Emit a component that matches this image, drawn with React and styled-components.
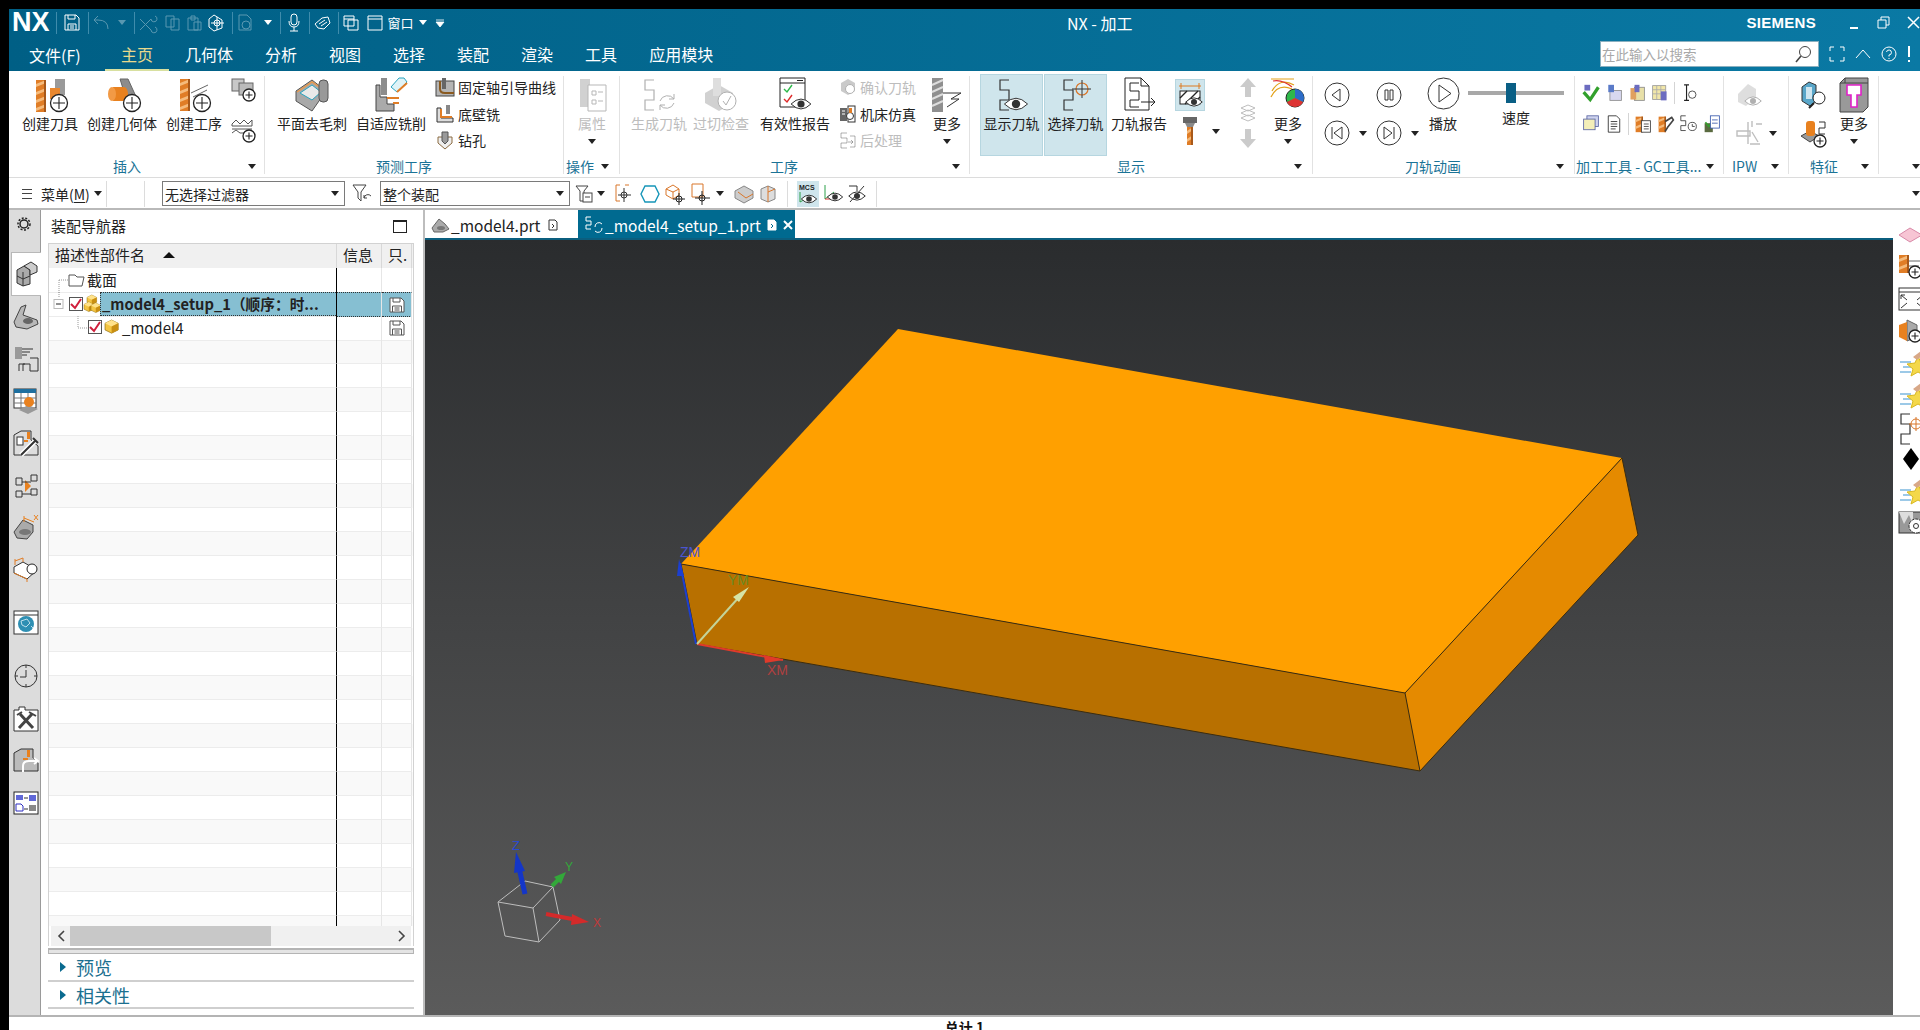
import React from 'react';
import styled, { createGlobalStyle } from 'styled-components';

const GlobalStyle = createGlobalStyle`
  html, body { margin: 0; padding: 0; background: #000; overflow: hidden; }
  * { box-sizing: border-box; }
  body { font-family: "Noto Sans CJK SC", "Noto Sans", sans-serif; }
`;

const Glyph = styled.svg`
  display: block;
  flex: none;
  overflow: visible;
`;

const G = ({ w = 24, h = 24, off, children }) => (
  <Glyph width={w} height={h} viewBox={`0 0 ${w} ${h}`} fill='none' opacity={off ? 0.38 : 1}>
    {children}
  </Glyph>
);

const Plus = ({ x, y, r = 8 }) => (
  <g>
    <circle cx={x} cy={y} r={r} fill='#fff' stroke='#222' strokeWidth='1.3' />
    <path d={`M${x - r + 2.5} ${y}H${x + r - 2.5}M${x} ${y - r + 2.5}V${y + r - 2.5}`} stroke='#222' strokeWidth='1.1' />
  </g>
);

const Bit = ({ x, y, w, h }) => {
  const stripes = [];
  for (let i = 0; i + 6 < h; i += 8) {
    stripes.push(<path key={i} d={`M${x} ${y + i + 4}L${x + w} ${y + i}V${y + i + 3}L${x} ${y + i + 7}Z`} fill='#f5bb7c' />);
  }
  return (
    <g>
      <rect x={x} y={y} width={w} height={h} fill='#e07d26' />
      {stripes}
      <rect x={x + w - 2} y={y} width='2' height={h} fill='#a8591a' />
    </g>
  );
};

const Eye = ({ x, y, s = 1 }) => (
  <g>
    <path d={`M${x - 11 * s} ${y}Q${x} ${y - 11 * s} ${x + 11 * s} ${y}Q${x} ${y + 11 * s} ${x - 11 * s} ${y}Z`} fill='#fff' stroke='#333' />
    <circle cx={x} cy={y} r={4 * s} fill='#333' />
  </g>
);

const Wave = ({ x = 0, y = 0, c = '#333' }) => (
  <path d={`M${x + 11} ${y + 1}H${x + 2}V${y + 11}H${x + 11}V${y + 21}H${x + 2}V${y + 31}H${x + 11}`} stroke={c} strokeWidth='1.2' />
);

const Cube = ({ x, y, s = 1, c = '#f4c542', d = '#c98f12', t = '#ffe28a' }) => (
  <g transform={`translate(${x} ${y}) scale(${s})`}>
    <path d='M6 0L12 3V9L6 12L0 9V3Z' fill={c} stroke='#8a6a10' strokeWidth='.6' />
    <path d='M6 0L12 3L6 6L0 3Z' fill={t} />
    <path d='M6 6L12 3V9L6 12Z' fill={d} />
  </g>
);

const Floppy = ({ c = '#555' }) => (
  <G w={16} h={16}>
    <path d='M1 1H12L15 4V15H1Z' stroke={c} fill='#fff' />
    <path d='M4 1V5H11V1M3.5 15V9H12.5V15M5.5 11H10.5M5.5 13H10.5' stroke={c} />
  </G>
);

const icons = {
  createTool: <G w={36} h={36}><Bit x={4} y={3} w={10} h={32} /><rect x={23} y={2} width={10} height={16} fill='#9a9a9a' /><rect x={18} y={11} width={10} height={11} fill='#e9872e' /><Plus x={27} y={26} r={8.5} /></G>,
  createGeom: <G w={36} h={36}><path d='M16 2H24L34 24L26 34Z' fill='#8c8c8c' stroke='#666' /><path d='M9 10H20A4 7 0 0 1 20 24H9Z' fill='#e8811f' /><ellipse cx='8' cy='17' rx='4' ry='7' fill='#f29a45' /><Plus x={28} y={26} r={8.5} /></G>,
  createOp: <G w={36} h={36}><Bit x={4} y={2} w={10} h={32} /><path d='M15 16L32 8M17 20L31 13M17 24H28' stroke='#666' /><Plus x={26} y={26} r={8.5} /></G>,
  smallGeom: <G w={24} h={24}><rect x='1' y='1' width='12' height='12' fill='#c8c8c8' stroke='#666' /><rect x='8' y='5' width='14' height='12' fill='#bbb' stroke='#666' /><Plus x={18} y={17} r={6} /></G>,
  smallOp: <G w={24} h={24}><path d='M1 6L5 2L9 6L13 2L17 6L21 2V8H1ZM1 11H21M1 15L5 12L9 15H14' stroke='#555' /><Plus x={18} y={18} r={6} /></G>,
  deburr: <G w={36} h={36}><path d='M2 14L18 3L32 14L18 34L2 24Z' fill='#a8a8a8' stroke='#555' /><path d='M3 15L18 5L30 13' stroke='#e89a4c' strokeWidth='1.5' /><path d='M6 16L18 8L27 15L18 23Z' fill='#e9e9e9' stroke='#2aa4c0' /><rect x='25' y='3' width='9' height='22' rx='4' fill='#999' stroke='#555' /></G>,
  adaptive: <G w={36} h={36}><path d='M3 8H7V20H14V27H21V34H3Z' fill='#aaa' stroke='#444' /><rect x={8} y={1} width={6} height={17} fill='#8c8c8c' /><path d='M14 21H26M20 26H26' stroke='#e07d26' strokeWidth='2' /><path d='M18 10L26 1H31L34 5L24 15Z' fill='#dff3f7' stroke='#2aa4c0' /><path d='M24 15L34 6' stroke='#e07d26' strokeWidth='2' /></G>,
  fixedAxis: <G w={20} h={20}><rect x='1' y='4' width='18' height='15' fill='#b5b5b5' stroke='#444' /><path d='M5 4V12Q5 16 10 16H19' stroke='#8a5a20' strokeWidth='2' /><rect x='7' y='1' width='4' height='11' fill='#666' /></G>,
  floorWall: <G w={20} h={20}><path d='M2 4H6V14H18V18H2Z' fill='#ddd' stroke='#333' /><path d='M6 5V13H17' stroke='#e07d26' strokeWidth='2' /><rect x='11' y='1' width='4' height='9' fill='#888' /></G>,
  drill: <G w={20} h={20}><path d='M3 7H17V13L10 19L3 13Z' fill='#eee' stroke='#8a6a40' /><path d='M7 2H13V11L10 14L7 11Z' fill='#9a9a9a' stroke='#555' /></G>,
  props: <G w={36} h={36} off><path d='M6 2H16V30H6Z' fill='#888' /><path d='M14 8H32V34H14Z' fill='#fff' stroke='#444' /><path d='M18 14H22V18H18ZM18 23H22V27H18ZM24 15H29M24 24H29' stroke='#444' /></G>,
  genPath: <G w={36} h={36} off><Wave x={2} y={2} /><path d='M19 24A8 8 0 0 1 33 22M33 26A8 8 0 0 1 19 28M33 17V22H28M19 33V28H24' stroke='#333' /></G>,
  gouge: <G w={36} h={36} off><path d='M2 16L16 8L30 16V26L16 34L2 26Z' fill='#888' /><rect x='10' y='1' width='8' height='18' fill='#aaa' /><circle cx='24' cy='24' r='9' fill='#fff' stroke='#333' /><path d='M20 24L23 28L28 19' stroke='#333' /></G>,
  validity: <G w={36} h={36}><path d='M3 1H28V30H3Z' fill='#fff' stroke='#222' /><path d='M3 6H28M20 3.5H26' stroke='#222' /><path d='M7 12L10 15L15 8' stroke='#2db84a' strokeWidth='1.4' /><path d='M7 22L10 25L15 18' stroke='#dd2b2b' strokeWidth='1.4' /><Eye x={24} y={27} s={.9} /></G>,
  confirm: <G w={18} h={18} off><path d='M2 5L9 1L16 5V13L9 17L2 13Z' fill='#777' /><circle cx='11' cy='11' r='4.5' fill='#fff' stroke='#333' /></G>,
  machine: <G w={18} h={18}><rect x='1' y='3' width='7' height='13' fill='#666' /><rect x='9' y='1' width='7' height='16' fill='none' stroke='#333' /><path d='M3 6H6M3 9H6' stroke='#fff' /><circle cx='11' cy='11' r='3.5' fill='#fff' stroke='#333' /><rect x='10' y='3' width='3' height='5' fill='#e07d26' /></G>,
  postproc: <G w={18} h={18} off><path d='M8 2H2V7H8V12H2V17H8M11 5H16V16H11M9 11H14M12 9L14 11L12 13' stroke='#333' /></G>,
  moreOp: <G w={36} h={36}><rect x='3' y='1' width='11' height='34' fill='#8f8f8f' /><path d='M3 8L14 3M3 15L14 10M3 22L14 17M3 29L14 24' stroke='#ddd' strokeWidth='2' /><path d='M14 16H32L22 22H30L18 30' stroke='#333' /></G>,
  showPath: <G w={36} h={36}><Wave x={4} y={2} /><Eye x={22} y={27} s={1.05} /></G>,
  selectPath: <G w={36} h={36}><Wave x={4} y={2} /><circle cx='24' cy='12' r='6' stroke='#d9762a' strokeWidth='1.2' /><path d='M14 12H33M24 3V21' stroke='#333' /></G>,
  reportPath: <G w={36} h={36}><path d='M4 1H20L28 9V33H4Z' stroke='#222' fill='#fff' /><path d='M20 1V9H28M18 6H9V14H18V23H9V30H18' stroke='#222' /><path d='M20 25H34M30 21L34 25L30 29' stroke='#222' /></G>,
  blank: <G w={26} h={26}><path d='M2 4H24M4 1V7M22 1V7' stroke='#dd7a20' /><rect x='3' y='9' width='20' height='13' fill='#fff' stroke='#222' /><path d='M3 16L10 9M8 22L21 9M16 22L23 15' stroke='#222' strokeWidth='1.4' /><Eye x={17} y={20} s={.75} /></G>,
  bitSmall: <G w={30} h={30}><g transform='translate(7 0)'><rect x='1' y='1' width='14' height='6' fill='#666' /><path d='M3 7H13L11 11H5Z' fill='#8a8a8a' /><Bit x={5} y={11} w={6} h={18} /></g></G>,
  up: <G w={18} h={22} off><path d='M9 1L17 10H12V20H6V10H1Z' fill='#777' /></G>,
  down: <G w={18} h={22} off><path d='M9 21L17 12H12V2H6V12H1Z' fill='#777' /></G>,
  stack: <G w={18} h={20} off><path d='M2 5L9 2L16 5L9 8ZM2 10L9 7L16 10L9 13ZM2 15L9 12L16 15L9 18Z' fill='#fff' stroke='#555' /></G>,
  gauge: <G w={36} h={36}><path d='M1 2H24M2 14Q10 0 24 8M1 20Q8 6 22 12' stroke='#e3a21a' strokeWidth='1.2' /><path d='M3 4Q12 2 22 10' stroke='#dd3333' strokeWidth='1.2' /><circle cx='25' cy='21' r='9' fill='#2fb84a' stroke='#222' /><path d='M25 21V12A9 9 0 0 1 33 25Z' fill='#2d6cc8' /><path d='M25 21L33 25A9 9 0 0 1 17 25Z' fill='#dd3333' /></G>,
  mach1: <G w={22} h={22}><path d='M2 10L10 19L20 4' stroke='#32a02c' strokeWidth='4' /><rect x='3' y='1' width='7' height='7' fill='#6c6cc0' /></G>,
  mach2: <G w={22} h={22}><rect x='6' y='8' width='14' height='12' fill='#d8d8f0' stroke='#888' /><rect x='4' y='1' width='7' height='9' fill='#5a7ac8' /></G>,
  mach3: <G w={22} h={22}><rect x='8' y='4' width='12' height='16' fill='#e8e0a8' stroke='#888' /><rect x='3' y='5' width='7' height='14' fill='#e0a060' /><rect x='8' y='1' width='6' height='9' fill='#6c6cc0' /></G>,
  mach4: <G w={22} h={22}><rect x='2' y='2' width='16' height='17' fill='#f1e6a8' stroke='#999' /><path d='M2 7H18M2 12H18M7 2V19M12 2V19' stroke='#aaa' /><rect x='12' y='9' width='7' height='11' fill='#6c6cc0' /></G>,
  mach5: <G w={22} h={22}><path d='M5 1H11M5 20H11M8 1V20' stroke='#222' strokeWidth='1.4' /><circle cx='15' cy='13' r='4.5' fill='#fff' stroke='#333' /></G>,
  mach6: <G w={22} h={22}><rect x='6' y='1' width='14' height='13' fill='#cfd4ef' stroke='#5560a0' /><rect x='2' y='5' width='14' height='13' fill='#f3eeb8' stroke='#5560a0' /></G>,
  mach7: <G w={22} h={22}><path d='M4 1H14L18 5V21H4Z' fill='#fff' stroke='#222' /><path d='M7 8H15M7 11H15M7 14H15M7 17H13' stroke='#222' /></G>,
  mach8: <G w={22} h={22}><Bit x={2} y={2} w={9} h={19} /><rect x='9' y='7' width='11' height='14' fill='#fff' stroke='#333' /><path d='M12 11H18M12 14H18M12 17H18' stroke='#333' /></G>,
  mach9: <G w={22} h={22}><Bit x={2} y={2} w={9} h={19} /><path d='M10 8L18 3L20 6L13 15L10 20' stroke='#444' strokeWidth='2' /></G>,
  mach10: <G w={22} h={22}><path d='M7 1H1V7H7V13H1V19H7' stroke='#333' /><circle cx='15' cy='14' r='5' fill='#fff' stroke='#333' /><path d='M15 11V14H18' stroke='#333' /></G>,
  mach11: <G w={22} h={22}><path d='M2 10H12V21H2Z' fill='#5a6a40' /><path d='M3 9L7 14L13 6' stroke='#33a02c' strokeWidth='2' /><rect x='9' y='1' width='11' height='15' fill='#fff' stroke='#3355aa' /><path d='M11 6H18M11 10H18' stroke='#3355aa' /></G>,
  ipwView: <G w={26} h={26} off><path d='M2 12L12 2L20 7V15L10 24L2 20Z' fill='#aaa' /><Eye x={17} y={19} s={.75} /></G>,
  ipwScope: <G w={26} h={26} off><path d='M1 11H14V16H1ZM12 2V24M16 1V7M20 4H26M14 24H24M16 12L22 22' stroke='#555' strokeWidth='1.4' /></G>,
  featFind: <G w={28} h={28}><path d='M2 6L9 1L16 4V20L10 25L2 20Z' fill='#59a6c9' stroke='#333' /><rect x='6' y='6' width='6' height='12' fill='#cfe6f0' /><circle cx='19' cy='17' r='6' fill='#fff' stroke='#222' /><path d='M14 22L9 27' stroke='#222' strokeWidth='2' /></G>,
  featAdd: <G w={28} h={28}><path d='M1 17L10 12L19 17L10 23Z' fill='#999' stroke='#444' /><rect x='6' y='2' width='9' height='15' rx='3' fill='#e8811f' /><path d='M19 3H25V9H19V15H25' stroke='#333' /><Plus x={20} y={22} r={6} /></G>,
  featMore: <G w={32} h={36}><path d='M2 6L7 1H30V30L25 35H2Z' fill='#999' stroke='#444' /><path d='M7 1V6H2M7 6H30' stroke='#444' /><path d='M9 8H23V18H19V30H13V18H9Z' fill='#fff' stroke='#e021c8' strokeWidth='1.6' /></G>,
  prev: <G w={26} h={26}><circle cx='13' cy='13' r='12' fill='#fff' stroke='#333' /><path d='M16 7V19L8 13Z' stroke='#333' /></G>,
  pause: <G w={26} h={26}><circle cx='13' cy='13' r='12' fill='#fff' stroke='#333' /><path d='M9 8H12V18H9ZM14 8H17V18H14Z' stroke='#333' /></G>,
  first: <G w={26} h={26}><circle cx='13' cy='13' r='12' fill='#fff' stroke='#333' /><path d='M8 7V19M18 7V19L10 13Z' stroke='#333' /></G>,
  last: <G w={26} h={26}><circle cx='13' cy='13' r='12' fill='#fff' stroke='#333' /><path d='M18 7V19M8 7V19L16 13Z' stroke='#333' /></G>,
  play: <G w={33} h={33}><circle cx='16.5' cy='16.5' r='15.5' fill='#fff' stroke='#333' /><path d='M12 8V25L24 16.5Z' stroke='#333' /></G>,
  filter: <G w={22} h={22}><path d='M1 2H14L9 9V18L6 15V9Z' stroke='#444' /><path d='M19 13A4 4 0 0 0 12 15M12 12V15H15' stroke='#444' /></G>,
  scope: <G w={20} h={20}><path d='M1 2H13L9 7V17H5V7Z' stroke='#444' /><rect x='8' y='9' width='9' height='9' fill='#fff' stroke='#444' /><path d='M10 13H15' stroke='#444' /></G>,
  fit: <G w={20} h={20}><path d='M5 1H1V17H5M10 1H14' stroke='#d9762a' /><circle cx='9' cy='11' r='3' stroke='#333' /><path d='M9 4V18M3 11H16' stroke='#333' /></G>,
  hex: <G w={20} h={20}><path d='M5 2H15L19 10L15 18H5L1 10Z' stroke='#1595b8' strokeWidth='1.4' fill='#fff' /></G>,
  boxPick: <G w={22} h={22}><path d='M2 6L9 2L15 6V12L9 16L2 12Z' stroke='#d9762a' /><path d='M2 6L9 9L15 6M9 9V16' stroke='#d9762a' /><circle cx='15' cy='16' r='3' stroke='#222' /><path d='M15 10V22M9 16H21' stroke='#222' /></G>,
  squarePick: <G w={22} h={22}><path d='M2 1H13V14H2Z' stroke='#d9762a' /><circle cx='12' cy='15' r='3' stroke='#222' /><path d='M12 8V22M5 15H20' stroke='#222' /></G>,
  shade1: <G w={20} h={20}><path d='M1 7L10 2L19 7V14L10 19L1 14Z' fill='#ccc' stroke='#888' /><path d='M4 8L12 14L19 10' stroke='#d9762a' /></G>,
  shade2: <G w={20} h={20}><path d='M3 5L10 2L17 5V15L10 18L3 15Z' fill='#ddd' stroke='#888' /><path d='M10 2V18M17 5L10 8' stroke='#d9762a' /></G>,
  mcsEye: <G w={22} h={22}><text x='2' y='7' fontSize='7' fontWeight='700' fill='#222' fontFamily='Liberation Sans'>MCS</text><path d='M3 9V19L12 14' stroke='#2da04a' /><Eye x={12} y={16} s={.7} /></G>,
  axisEye: <G w={22} h={22}><path d='M3 2V16L12 9' stroke='#2da04a' /><path d='M3 16H14' stroke='#dd3333' /><Eye x={13} y={14} s={.7} /></G>,
  noEye: <G w={22} h={22}><Eye x={11} y={13} s={.75} /><path d='M4 19L18 3M3 3H11V8' stroke='#333' /></G>,
};

const railIcons = {
  gear: <G w={16} h={16}><circle cx='8' cy='8' r='4' stroke='#222' strokeWidth='1.5' /><circle cx='8' cy='8' r='6' stroke='#222' strokeWidth='1.5' strokeDasharray='2 1.6' /></G>,
  parts: <G w={22} h={26}><path d='M2 9L9 5L15 9V23L8 25L2 22Z' fill='#aaa' stroke='#333' /><path d='M9 5L16 1L22 5V11L15 14V9Z' fill='#ccc' stroke='#333' /><path d='M2 15L8 18L15 15M8 11V25' stroke='#333' /></G>,
  part: <G w={26} h={26}><path d='M1 18L8 3L13 1L10 11L24 16L25 20L14 25L3 23Z' fill='#b8b8b8' stroke='#444' /><ellipse cx='15' cy='17' rx='5' ry='3' fill='#666' /></G>,
  ops: <G w={26} h={26}><rect x='2' y='1' width='7' height='12' fill='#999' /><path d='M9 3H20M9 6H17M9 9H14M10 25V18H17V25M6 25V18H12M17 12H25V25H17' stroke='#333' /></G>,
  table: <G w={26} h={26}><rect x='1' y='1' width='22' height='19' fill='#fff' stroke='#333' /><rect x='1' y='1' width='22' height='4' fill='#1e6f9f' /><path d='M1 10H23M1 15H23M8 5V20M15 5V20' stroke='#777' /><path d='M6 22L15 17L25 21L15 26Z' fill='#999' /><circle cx='16' cy='14' r='5' fill='#e8811f' /></G>,
  machine: <G w={26} h={26}><path d='M1 5L8 1H18V10L25 16V25H1Z' fill='#ddd' stroke='#333' /><rect x='4' y='7' width='6' height='8' fill='#fff' stroke='#333' /><rect x='14' y='2' width='3' height='7' fill='#e8811f' /><path d='M11 11H15' stroke='#e8811f' strokeWidth='2' /><path d='M8 25L22 11' stroke='#fff' strokeWidth='5' /><path d='M8 25L22 11M20 8L25 13' stroke='#333' strokeWidth='2' /></G>,
  tree: <G w={26} h={26}><path d='M3 6H9V13H3ZM3 19H9V25H3ZM18 3H24V9H18ZM18 17H24V23H18Z' stroke='#333' fill='#ddd' /><path d='M12 8L18 14L12 20Z' fill='#e8811f' /><path d='M9 10H18M9 22H18' stroke='#333' /></G>,
  partDim: <G w={26} h={26}><path d='M1 18L10 6L20 11V18L14 25L4 24Z' fill='#aaa' stroke='#444' /><ellipse cx='12' cy='18' rx='6' ry='3' fill='#777' /><path d='M11 2V8M11 4L21 8M21 1L25 6M25 1L21 6' stroke='#e8811f' /></G>,
  boxFind: <G w={26} h={26}><path d='M1 11L10 6L24 14L14 23L1 17Z' fill='#fff' stroke='#333' /><path d='M1 17L14 23V26M2 3V9M2 5L10 2V6' stroke='#e07d26' /><circle cx='19' cy='13' r='5' fill='#fff' stroke='#222' /></G>,
  web: <G w={26} h={26}><rect x='1' y='1' width='24' height='23' fill='#fff' stroke='#333' /><path d='M1 5H25' stroke='#333' /><circle cx='13' cy='14' r='8' fill='#2e8fb3' /><path d='M8 11L14 9L17 13L13 17L9 15ZM18 16L20 18' stroke='#bfe0ec' /></G>,
  clock: <G w={24} h={24}><circle cx='12' cy='12' r='11' stroke='#333' /><path d='M12 1V4M12 20V23M1 12H4M20 12H23M12 6V13H6' stroke='#333' /></G>,
  tools: <G w={26} h={26}><path d='M1 4H6V1H12V4H25V25H1Z' fill='#fff' stroke='#333' /><path d='M7 8L20 22M19 8L6 22' stroke='#444' strokeWidth='3' /><path d='M16 6L23 10M4 9L9 6' stroke='#444' strokeWidth='2' /></G>,
  machineArrow: <G w={26} h={26}><path d='M1 5L8 1H20V10L25 15V23H1Z' fill='#bbb' stroke='#333' /><rect x='14' y='2' width='3' height='7' fill='#e8811f' /><path d='M10 11H15' stroke='#e8811f' strokeWidth='2' /><path d='M10 24V18Q10 13 16 13H24M21 10L25 13L21 16' stroke='#fff' strokeWidth='2' /></G>,
  layout: <G w={26} h={24}><rect x='1' y='1' width='24' height='22' fill='#fff' stroke='#222' /><rect x='3' y='4' width='7' height='5' fill='#6068d8' /><rect x='16' y='4' width='7' height='6' fill='#6068d8' /><path d='M11 7H15M11 18H15' stroke='#333' /><path d='M3 13H8L10 15V20H3Z' stroke='#2c2cc0' /><rect x='16' y='14' width='7' height='6' fill='#888' /></G>,
};

const Star = () => (
  <G w={32} h={28}>
    <path d='M1 13H12M4 18H12M1 23H12' stroke='#7cb8e0' strokeWidth='1.6' />
    <path d='M19 7L22 14L30 15L24 20L26 27L19 23L12 27L14 20L8 15L16 14Z' fill='#f4d84a' stroke='#d8b820' />
    <path d='M14 8L22 2L26 4L18 11Z' fill='#d8a888' /><path d='M24 1L30 0L29 6L25 6Z' fill='#4055b8' />
  </G>
);

const rightIcons = [
  <G key='a' w={26} h={16}><path d='M0 8L11 1L23 8L11 15Z' fill='#f7c5d4' stroke='#d88aa8' /></G>,
  <G key='b' w={28} h={26}><Bit x={0} y={1} w={10} h={18} /><path d='M10 7H22M10 12H20M10 16H16' stroke='#666' /><Plus x={16} y={18} r={6} /></G>,
  <G key='c' w={28} h={24}><rect x='0' y='1' width='26' height='22' stroke='#333' /><path d='M0 5H26M2 8L8 13M2 8V12M2 8H6M24 8L18 13M2 21L8 16M24 21L18 16' stroke='#333' /></G>,
  <G key='d' w={28} h={24}><path d='M8 1L18 6V18L8 22Z' fill='#aaa' stroke='#666' /><path d='M0 6L8 3V22L0 18Z' fill='#e8811f' /><Plus x={16} y={17} r={6} /></G>,
  <Star key='e' />,
  <Star key='f' />,
  <G key='g' w={28} h={28}><Wave x={0} y={0} /><circle cx='17' cy='11' r='5' stroke='#d9762a' /><path d='M10 11H24M17 4V18' stroke='#d9762a' /></G>,
  <G key='h' w={26} h={24}><path d='M4 12L12 1L20 12L12 23Z' fill='#000' /></G>,
  <Star key='i' />,
  <G key='j' w={28} h={24}><rect x='0' y='1' width='26' height='21' fill='#999' stroke='#333' /><path d='M0 1L5 13L10 4L14 14V1' fill='#ddd' /><circle cx='17' cy='15' r='7' fill='#fff' stroke='#333' strokeDasharray='3 1' /><circle cx='17' cy='15' r='2.5' stroke='#333' /></G>,
];

const Page = styled.div`
  width: 1920px;
  height: 1030px;
  padding: 9px 0 0 9px;
  background: #000;
  display: flex;
  flex-direction: column;
  overflow: hidden;
  font-size: 14px;
  color: #222;
`;

/* --- title bar --- */
const TitleBar = styled.div`
  height: 27px;
  flex: none;
  display: flex;
  align-items: center;
  color: #fff;
  background: linear-gradient(to right, #005f85, #0a79a4);
`;
const Logo = styled.div`
  width: 47px;
  padding-left: 3px;
  font: 700 27px/27px "Liberation Sans", sans-serif;
`;
const Quick = styled.div`
  width: ${(p) => p.$w}px;
  flex: none;
  display: flex;
  justify-content: center;
  align-items: center;
  opacity: ${(p) => (p.$off ? 0.35 : 1)};
  font-size: 13px;
`;
const QuickSep = styled.div`
  width: ${(p) => p.$w}px;
  height: 22px;
  flex: none;
  border-right: 1px solid #3f8cac;
`;
const WhiteCaret = styled.div`
  width: 0;
  height: 0;
  border-left: 4px solid transparent;
  border-right: 4px solid transparent;
  border-top: 5px solid #fff;
`;
const WindowTitle = styled.div`
  margin-left: 619px;
  width: 70px;
  font-size: 16px;
  white-space: nowrap;
`;
const Brand = styled.div`
  margin-left: auto;
  margin-right: 10px;
  font: 700 15px/27px "Liberation Sans", sans-serif;
  letter-spacing: 0.3px;
`;
const WinButtons = styled.div`
  display: flex;
  align-items: center;
  margin-left: 22px;
  gap: 17px;
`;

/* --- menu bar --- */
const MenuBar = styled.div`
  height: 35px;
  flex: none;
  display: flex;
  align-items: center;
  color: #fff;
  background: linear-gradient(to right, #005f85, #0a79a4);
`;
const MenuFile = styled.div`
  margin: 2px 25px 0 20px;
  font-size: 16px;
  width: 51px;
  white-space: nowrap;
`;
const MenuItem = styled.div`
  padding: 0 16px;
  height: 35px;
  line-height: 37px;
  font-size: 16px;
  color: ${(p) => (p.$on ? '#e8d98c' : '#fff')};
  box-shadow: ${(p) => (p.$on ? 'inset 0 -2px 0 #d8e0a0' : 'none')};
`;
const SearchBox = styled.div`
  margin-left: auto;
  width: 219px;
  height: 26px;
  background: #fff;
  border: 1px solid #8ab0c0;
  display: flex;
  align-items: center;
  justify-content: space-between;
  padding: 0 7px 0 1px;
  font-size: 13.5px;
  color: #a8a8a8;
`;
const MenuTools = styled.div`
  display: flex;
  align-items: center;
  gap: 10px;
  margin-left: 10px;
  width: 91px;
`;

/* --- ribbon --- */
const Ribbon = styled.div`
  height: 107px;
  flex: none;
  display: flex;
  background: #fff;
  padding-top: 5px;
  border-bottom: 1px solid #dcdcdc;
`;
const Group = styled.div`
  width: ${(p) => p.$w}px;
  flex: none;
  height: 98px;
  display: flex;
  flex-direction: column;
  border-right: ${(p) => (p.$last ? 'none' : '1px solid #e2e2e2')};
`;
const GroupBody = styled.div`
  height: 83px;
  display: flex;
  align-items: flex-start;
  padding-left: ${(p) => p.$pad || 0}px;
`;
const GroupFoot = styled.div`
  height: 15px;
  display: flex;
  align-items: center;
  padding-left: ${(p) => p.$pad || 0}px;
  padding-right: ${(p) => p.$right || 0}px;
  color: #1b7396;
  font-size: 14px;
  white-space: nowrap;
  line-height: 15px;
  & > span { margin-right: auto; }
`;
const Caret = styled.div`
  width: 0;
  height: 0;
  flex: none;
  border-left: 4px solid transparent;
  border-right: 4px solid transparent;
  border-top: 5px solid #222;
  margin-left: ${(p) => p.$ml || 0}px;
  margin-top: ${(p) => p.$mt || 0}px;
`;
const EndCaret = styled(Caret)`
  margin-left: auto;
`;
const Big = styled.div`
  width: ${(p) => p.$w}px;
  margin-left: ${(p) => p.$ml || 0}px;
  flex: none;
  display: flex;
  flex-direction: column;
  align-items: center;
  color: ${(p) => (p.$off ? '#bdbdbd' : '#222')};
  & > :first-child { margin-top: 1px; }
`;
const IconSlot = styled.div`
  height: 36px;
  display: flex;
  justify-content: center;
  align-items: flex-start;
`;
const Label = styled.div`
  line-height: 20px;
  height: 20px;
  white-space: nowrap;
  font-size: 14px;
`;
const ActiveBig = styled(Big)`
  height: 82px;
  margin-top: -2px;
  background: #cfe5ec;
  border: 1px solid #b6d6e0;
  padding-top: 1px;
`;
const Column = styled.div`
  width: ${(p) => p.$w}px;
  margin-left: ${(p) => p.$ml || 0}px;
  flex: none;
  display: flex;
  flex-direction: column;
  align-items: ${(p) => p.$align || 'center'};
  gap: ${(p) => p.$gap || 0}px;
  margin-top: ${(p) => p.$top || 0}px;
`;
const SmallRow = styled.div`
  height: 26.5px;
  display: flex;
  align-items: center;
  gap: 3px;
  white-space: nowrap;
  color: ${(p) => (p.$off ? '#bdbdbd' : '#222')};
`;
const Highlight = styled.div`
  background: #cfe5ec;
  border: 1px solid #b6d6e0;
  width: 30px;
  height: 32px;
  display: flex;
  align-items: center;
  justify-content: center;
`;
const PlayerGrid = styled.div`
  width: 97px;
  flex: none;
  margin: 6px 0 0 11px;
  display: grid;
  grid-template-columns: 52px 45px;
  row-gap: 12px;
`;
const PlayerCell = styled.div`
  display: flex;
  align-items: center;
  gap: 9px;
`;
const SpeedBox = styled.div`
  width: 96px;
  margin-left: 3px;
  flex: none;
  padding-top: 7px;
  display: flex;
  flex-direction: column;
  align-items: center;
  gap: 4px;
`;
const Track = styled.div`
  width: 96px;
  height: 20px;
  position: relative;
  &::before {
    content: '';
    display: block;
    position: absolute;
    top: 8px;
    left: 0;
    right: 0;
    height: 4px;
    background: #a8a8a8;
  }
`;
const Thumb = styled.div`
  position: absolute;
  left: 38px;
  top: 0;
  width: 10px;
  height: 20px;
  background: #0a5f85;
`;
const MachRow = styled.div`
  display: flex;
  align-items: center;
  height: 24px;
  padding-left: 4px;
  margin-top: ${(p) => p.$mt}px;
`;
const MachCell = styled.div`
  width: 23px;
  display: flex;
  justify-content: center;
  & svg { width: 18px; height: 18px; }
`;
const MachSep = styled.div`
  width: 6px;
  height: 22px;
  flex: none;
  display: flex;
  justify-content: center;
  &::after { content: ''; width: 1px; background: #d4d4d4; }
`;

/* --- quick bar --- */
const QuickBar = styled.div`
  height: 32px;
  flex: none;
  display: flex;
  align-items: center;
  background: #fff;
  border-bottom: 2px solid #b9b9b9;
  padding-top: 1px;
`;
const BarItem = styled.div`
  width: ${(p) => p.$w}px;
  margin-left: ${(p) => p.$ml || 0}px;
  flex: none;
  display: flex;
  justify-content: center;
  align-items: center;
  height: 26px;
  background: ${(p) => (p.$on ? '#cfe5ec' : 'none')};
`;
const BarSep = styled.div`
  width: ${(p) => p.$w}px;
  flex: none;
  height: 26px;
  border-right: 1px solid #dcdcdc;
`;
const Burger = styled.div`
  width: 10px;
  height: 10px;
  margin: 0 9px 0 13px;
  border-top: 1px solid #444;
  border-bottom: 1px solid #444;
  background: linear-gradient(#444, #444) center / 100% 1px no-repeat;
`;
const BarMenu = styled.div`
  width: 52px;
  font-size: 14px;
  white-space: nowrap;
  u { text-underline-offset: 2px; }
`;
const Select = styled.div`
  width: ${(p) => p.$w}px;
  height: 25px;
  flex: none;
  border: 1px solid #7a7a7a;
  display: flex;
  align-items: center;
  justify-content: space-between;
  padding: 0 5px 0 2px;
  font-size: 14px;
  margin-left: ${(p) => p.$ml || 0}px;
`;

/* --- workspace --- */
const Workspace = styled.div`
  flex: 1;
  min-height: 0;
  display: flex;
`;
const Rail = styled.div`
  width: 32px;
  flex: none;
  background: #dcdcdc;
  border-right: 1px solid #9a9a9a;
  display: flex;
  flex-direction: column;
  align-items: center;
`;
const RailGear = styled.div`
  height: 42px;
  width: 100%;
  padding: 6px 2px 0 0;
  display: flex;
  justify-content: center;
  align-items: flex-start;
`;
const RailTab = styled.div`
  height: 44px;
  width: 30px;
  margin-left: 2px;
  background: #fff;
  border: 1px solid #b8b8b8;
  border-right: none;
  display: flex;
  align-items: center;
  justify-content: center;
`;
const RailItem = styled.div`
  height: 42px;
  flex: none;
  margin-top: ${(p) => p.$mt || 0}px;
  padding-left: 3px;
  display: flex;
  align-items: center;
`;
const Panel = styled.div`
  width: 384px;
  flex: none;
  background: #fff;
  border-right: 2px solid #bdbdbd;
  display: flex;
  flex-direction: column;
  padding: 0 9px 6px 7px;
`;
const PanelHead = styled.div`
  height: 33px;
  flex: none;
  display: flex;
  align-items: center;
  justify-content: space-between;
  padding: 0 7px 2px 3px;
  font-size: 15px;
`;
const MaxBox = styled.div`
  width: 14px;
  height: 13px;
  border: 1px solid #222;
  border-top-width: 2px;
  margin-top: 2px;
`;
const TreeTable = styled.div`
  flex: 1;
  min-height: 0;
  border: 1px solid #d2d2d2;
  border-bottom: none;
  display: flex;
  flex-direction: column;
`;
const TreeHead = styled.div`
  height: 24px;
  flex: none;
  background: #f0f0f0;
  display: grid;
  grid-template-columns: 288px 45px 30px;
  font-size: 15px;
  line-height: 22px;
`;
const HeadCell = styled.div`
  border-right: 1px solid #d8d8d8;
  padding-left: ${(p) => p.$pad}px;
  padding-bottom: 2px;
  display: flex;
  align-items: center;
  gap: 18px;
  overflow: hidden;
  white-space: nowrap;
`;
const SortUp = styled.div`
  width: 0;
  height: 0;
  border-left: 6px solid transparent;
  border-right: 6px solid transparent;
  border-bottom: 6px solid #111;
`;
const TreeBody = styled.div`
  flex: 1;
  min-height: 0;
  overflow: hidden;
`;
const TreeRow = styled.div`
  height: 24px;
  display: grid;
  grid-template-columns: 288px 45px 30px;
  background: ${(p) => (p.$alt ? '#f9f9f9' : '#fff')};
`;
const NameCell = styled.div`
  border-right: 1px solid #000;
  border-bottom: 1px solid #ececec;
  display: flex;
  align-items: center;
  overflow: visible;
  white-space: nowrap;
  font-size: 15px;
  padding-bottom: ${(p) => p.$lift || 0}px;
`;
const SideCell = styled.div`
  border-right: 1px solid #e6e6e6;
  border-bottom: 1px solid #ececec;
  display: flex;
  align-items: center;
  justify-content: center;
  background: ${(p) => (p.$sel ? '#86bfd2' : 'none')};
  ${(p) => (p.$sel ? 'border-top: 1px dotted #333; border-bottom: 1px dotted #333;' : '')}
`;
const SelName = styled.div`
  flex: 1;
  height: 24px;
  line-height: 21px;
  background: #86bfd2;
  border-top: 1px dotted #333;
  border-bottom: 1px dotted #333;
  border-left: 1px dotted #333;
  padding-left: 1px;
  font-size: 14.7px;
  font-weight: 700;
  color: #222;
`;
const Check = styled.div`
  width: 14px;
  height: 14px;
  flex: none;
  background: #fff;
  border: 1px solid #555;
  display: flex;
  align-items: center;
  justify-content: center;
`;
const ModelName = styled.div`
  font-size: 15px;
  margin-left: 1px;
`;
const ScrollBar = styled.div`
  height: 20px;
  flex: none;
  margin: 0 2px;
  background: #f0f0f0;
  display: flex;
  align-items: center;
`;
const ScrollEnd = styled.div`
  width: 19px;
  flex: none;
  display: flex;
  justify-content: center;
`;
const ScrollThumb = styled.div`
  width: 201px;
  height: 20px;
  background: #c8c8c8;
  margin-right: auto;
`;
const Splitter = styled.div`
  height: 6px;
  flex: none;
  margin-top: 2px;
  border: 1px solid #b4b4b4;
  border-top-width: 2px;
  background: #e4e4e4;
`;
const Section = styled.div`
  height: 27.5px;
  flex: none;
  display: flex;
  align-items: center;
  gap: 10px;
  padding: 1px 0 0 12px;
  border-bottom: 2px solid #cfcfcf;
  color: #1b6f8f;
  font-size: 18px;
  line-height: 24px;
`;
const SectionCaret = styled.div`
  width: 0;
  height: 0;
  border-top: 5px solid transparent;
  border-bottom: 5px solid transparent;
  border-left: 6px solid #0a6a8f;
`;

const Center = styled.div`
  flex: 1;
  min-width: 0;
  display: flex;
  flex-direction: column;
  background: #fff;
`;
const TabBar = styled.div`
  height: 30px;
  flex: none;
  display: flex;
  align-items: stretch;
  border-bottom: 2px solid #0b5e7e;
`;
const Tab = styled.div`
  width: ${(p) => p.$w}px;
  flex: none;
  display: flex;
  align-items: center;
  padding: 2px 0 0 ${(p) => p.$pad}px;
  background: ${(p) => (p.$on ? '#006a90' : '#fff')};
  color: ${(p) => (p.$on ? '#fff' : '#222')};
  font-size: 15.5px;
  white-space: nowrap;
`;
const TabIcon = styled.div`
  margin-left: ${(p) => p.$ml}px;
  flex: none;
`;
const Viewport = styled.div`
  flex: 1;
  min-height: 0;
  background: linear-gradient(#2a2c2e, #5b5b5b);
  & svg { display: block; width: 100%; height: 100%; }
`;
const RightRail = styled.div`
  width: 27px;
  flex: none;
  background: #fff;
  padding: 9px 0 0 6px;
  overflow: hidden;
  display: flex;
  flex-direction: column;
`;
const RightItem = styled.div`
  height: 32px;
  flex: none;
  display: flex;
  align-items: center;
`;
const StatusBar = styled.div`
  height: 15px;
  flex: none;
  background: #fff;
  border-top: 2px solid #b4b4b4;
  text-align: center;
  font-size: 14px;
  font-weight: 700;
  line-height: 18px;
  padding: 1px 0 0 0;
  overflow: hidden;
  color: #111;
`;

const Model = () => (
  <svg viewBox='425 239 1468 775' preserveAspectRatio='none'>
    <path d='M898 328L1622 457L1405 692L681 563Z' fill='#ffa000' />
    <path d='M681 563L1405 692L1420 770L697 643Z' fill='#b87000' />
    <path d='M1622 457L1638 534L1420 770L1405 692Z' fill='#e58a00' />
    <path d='M681 563L1405 692L1622 457M1405 692L1420 770L1638 534L1622 457M681 563L697 643L1420 770' stroke='#3a2c10' strokeWidth='1' fill='none' />
    <path d='M696 643L680 562' stroke='#1c3fd0' strokeWidth='2' />
    <path d='M679 558L684 575L677 575Z' fill='#1c3fd0' />
    <path d='M697 643L783 659' stroke='#e03a2a' strokeWidth='2' />
    <path d='M783 659L765 662L764 654Z' fill='#e03a2a' />
    <path d='M697 643L740 595' stroke='#c4d49a' strokeWidth='2' />
    <path d='M749 586L739 601L733 596Z' fill='#d6e4a6' />
    <text x='680' y='556' fontSize='14' fill='#4a55d0' fontFamily='Liberation Sans'>ZM</text>
    <text x='728' y='584' fontSize='14' fill='#6a8a20' fontFamily='Liberation Sans'>YM</text>
    <text x='767' y='674' fontSize='14' fill='#b04040' fontFamily='Liberation Sans'>XM</text>
    <path d='M498 901L525 880L553 886L533 907ZM498 901L505 935L539 941L533 907M539 941L560 919L553 886' stroke='#bdbdbd' strokeWidth='1' fill='none' />
    <path d='M525 893L519 867' stroke='#1436c8' strokeWidth='5' />
    <path d='M516 851L525 870L514 872Z' fill='#1436c8' />
    <text x='512' y='849' fontSize='13' fill='#2a4ad0' fontFamily='Liberation Sans'>Z</text>
    <path d='M552 885L560 877' stroke='#33a83a' strokeWidth='4' />
    <path d='M566 871L561 883L554 876Z' fill='#33a83a' />
    <text x='565' y='870' fontSize='12' fill='#33a83a' fontFamily='Liberation Sans'>Y</text>
    <path d='M546 913L572 918' stroke='#d42a2a' strokeWidth='4' />
    <path d='M589 921L571 924L572 913Z' fill='#d42a2a' />
    <text x='593' y='926' fontSize='12' fill='#c03a3a' fontFamily='Liberation Sans'>X</text>
  </svg>
);

const Tick = () => (
  <G w={12} h={12}><path d='M1 6L5 10L11 1' stroke='#d01f3c' strokeWidth='2' /></G>
);

const menuItems = ['主页', '几何体', '分析', '视图', '选择', '装配', '渲染', '工具', '应用模块'];

const railItems = [
  ['part', 0], ['ops', 0], ['table', 0], ['machine', 0], ['tree', 0], ['partDim', 0], ['boxFind', 0],
  ['web', 12], ['clock', 11], ['tools', 1], ['machineArrow', 0], ['layout', 0],
];

const emptyRows = Array.from({ length: 25 }, (_, i) => i);

export default function App() {
  return (
    <Page>
      <GlobalStyle />
      <TitleBar>
        <Logo>NX</Logo>
        <QuickSep $w={1} />
        <Quick $w={30}><G w={16} h={17}><path d='M1 1H12L15 4V16H1Z' stroke='#fff' /><path d='M4 1V5H11V1M4 16V10H12V16M6 12H10M6 14H10' stroke='#fff' /></G></Quick>
        <QuickSep $w={2} />
        <Quick $w={24} $off><G w={16} h={14}><path d='M15 13Q15 4 5 4H1M5 0L1 4L5 8' stroke='#fff' /></G></Quick>
        <Quick $w={18} $off><WhiteCaret /></Quick>
        <QuickSep $w={4} />
        <Quick $w={26} $off><G w={18} h={16}><path d='M1 15L12 4M1 4L12 15M12 4A3 3 0 1 0 16 1M12 15A3 3 0 1 0 16 12' stroke='#fff' /></G></Quick>
        <Quick $w={22} $off><G w={15} h={16}><path d='M1 1H9V12H1ZM6 4H14V15H6Z' stroke='#fff' /></G></Quick>
        <Quick $w={22} $off><G w={15} h={16}><path d='M1 3H11V15H1ZM4 1H8V5H4ZM7 7H14V15H7Z' stroke='#fff' /></G></Quick>
        <Quick $w={24}><G w={18} h={18}><path d='M6 1L14 6V14L6 17L1 13V5Z' stroke='#fff' /><circle cx='9' cy='9' r='3' stroke='#fff' /><path d='M9 3V16M3 9H16' stroke='#fff' /></G></Quick>
        <QuickSep $w={4} />
        <Quick $w={24} $off><G w={14} h={17}><path d='M1 1H9L13 5V16H1Z' stroke='#fff' /><circle cx='8' cy='11' r='4' stroke='#fff' /></G></Quick>
        <Quick $w={22}><WhiteCaret /></Quick>
        <QuickSep $w={2} />
        <Quick $w={26}><G w={12} h={19}><rect x='3' y='1' width='6' height='11' rx='3' stroke='#fff' /><path d='M1 8Q1 14 6 14Q11 14 11 8M6 14V18M2 18H10' stroke='#fff' /></G></Quick>
        <QuickSep $w={3} />
        <Quick $w={26}><G w={18} h={14}><path d='M1 8L8 2L14 1L16 7L10 13L4 12Z' stroke='#fff' /><path d='M5 8L11 4M7 10L13 6' stroke='#fff' /></G></Quick>
        <QuickSep $w={3} />
        <Quick $w={24}><G w={16} h={16}><path d='M1 1H11V11H1ZM5 5H15V15H5Z' stroke='#fff' /><path d='M1 4H11' stroke='#fff' /></G></Quick>
        <Quick $w={24}><G w={16} h={16}><path d='M1 1H15V15H1ZM1 4H15' stroke='#fff' /></G></Quick>
        <Quick $w={27}>窗口</Quick>
        <Quick $w={18}><WhiteCaret /></Quick>
        <Quick $w={16}><G w={8} h={8}><path d='M0 1H8M0 3H8L4 8Z' stroke='#fff' fill='#fff' strokeWidth='.8' /></G></Quick>
        <WindowTitle>NX - 加工</WindowTitle>
        <Brand>SIEMENS</Brand>
        <WinButtons>
          <G w={12} h={12}><path d='M2 11H10' stroke='#fff' strokeWidth='2' /></G>
          <G w={13} h={13}><path d='M1 4H9V12H1ZM4 4V1H12V9H9' stroke='#fff' /></G>
          <G w={13} h={13}><path d='M1 1L12 12M12 1L1 12' stroke='#fff' strokeWidth='1.5' /></G>
        </WinButtons>
      </TitleBar>

      <MenuBar>
        <MenuFile>文件(F)</MenuFile>
        {menuItems.map((m) => (
          <MenuItem key={m} $on={m === '主页'}>{m}</MenuItem>
        ))}
        <SearchBox>
          在此输入以搜索
          <G w={16} h={18}><circle cx='10' cy='7' r='5.5' stroke='#444' /><path d='M6 11L1 17' stroke='#444' strokeWidth='1.6' /></G>
        </SearchBox>
        <MenuTools>
          <G w={16} h={16}><path d='M1 5V1H5M11 1H15V5M15 11V15H11M5 15H1V11' stroke='#fff' /></G>
          <G w={16} h={10}><path d='M1 9L8 1L15 9' stroke='#fff' /></G>
          <G w={16} h={16}><circle cx='8' cy='8' r='7' stroke='#fff' /><path d='M5.5 6A2.5 2.5 0 1 1 8 9V10.5M8 12V13' stroke='#fff' /></G>
          <G w={4} h={18}><path d='M2 1V12M2 15V17' stroke='#fff' strokeWidth='2' /></G>
        </MenuTools>
      </MenuBar>

      <Ribbon>
        <Group $w={256}>
          <GroupBody $pad={5}>
            <Big $w={72}><IconSlot>{icons.createTool}</IconSlot><Label>创建刀具</Label></Big>
            <Big $w={72}><IconSlot>{icons.createGeom}</IconSlot><Label>创建几何体</Label></Big>
            <Big $w={72}><IconSlot>{icons.createOp}</IconSlot><Label>创建工序</Label></Big>
            <Column $w={26} $top={2} $gap={16}>{icons.smallGeom}{icons.smallOp}</Column>
          </GroupBody>
          <GroupFoot $pad={104} $right={8}><span>插入</span><Caret /></GroupFoot>
        </Group>

        <Group $w={299}>
          <GroupBody $pad={12}>
            <Big $w={70}><IconSlot>{icons.deburr}</IconSlot><Label>平面去毛刺</Label></Big>
            <Big $w={70} $ml={9}><IconSlot>{icons.adaptive}</IconSlot><Label>自适应铣削</Label></Big>
            <Column $w={130} $ml={9} $top={-2} $align='flex-start'>
              <SmallRow>{icons.fixedAxis}固定轴引导曲线</SmallRow>
              <SmallRow>{icons.floorWall}底壁铣</SmallRow>
              <SmallRow>{icons.drill}钻孔</SmallRow>
            </Column>
          </GroupBody>
          <GroupFoot $pad={111}><span>预测工序</span></GroupFoot>
        </Group>

        <Group $w={56}>
          <GroupBody>
            <Big $w={56} $off><IconSlot>{icons.props}</IconSlot><Label>属性</Label><Caret $mt={6} /></Big>
          </GroupBody>
          <GroupFoot $pad={2} $right={10}><span>操作</span><Caret /></GroupFoot>
        </Group>

        <Group $w={350}>
          <GroupBody $pad={11}>
            <Big $w={56} $off><IconSlot>{icons.genPath}</IconSlot><Label>生成刀轨</Label></Big>
            <Big $w={56} $ml={6} $off><IconSlot>{icons.gouge}</IconSlot><Label>过切检查</Label></Big>
            <Big $w={70} $ml={11}><IconSlot>{icons.validity}</IconSlot><Label>有效性报告</Label></Big>
            <Column $w={86} $ml={9} $top={-2} $align='flex-start'>
              <SmallRow $off>{icons.confirm}确认刀轨</SmallRow>
              <SmallRow>{icons.machine}机床仿真</SmallRow>
              <SmallRow $off>{icons.postproc}后处理</SmallRow>
            </Column>
            <Big $w={44}><IconSlot>{icons.moreOp}</IconSlot><Label>更多</Label><Caret $mt={6} /></Big>
          </GroupBody>
          <GroupFoot $pad={150} $right={9}><span>工序</span><Caret /></GroupFoot>
        </Group>

        <Group $w={343}>
          <GroupBody $pad={10}>
            <ActiveBig $w={63}><IconSlot>{icons.showPath}</IconSlot><Label>显示刀轨</Label></ActiveBig>
            <ActiveBig $w={63} $ml={1}><IconSlot>{icons.selectPath}</IconSlot><Label>选择刀轨</Label></ActiveBig>
            <Big $w={56} $ml={4}><IconSlot>{icons.reportPath}</IconSlot><Label>刀轨报告</Label></Big>
            <Column $w={50} $ml={8} $align='flex-start' $top={3} $gap={7}>
              <Highlight>{icons.blank}</Highlight>
              <SmallRow>{icons.bitSmall}<Caret $ml={4} /></SmallRow>
            </Column>
            <Column $w={20} $ml={13} $top={1} $gap={4}>{icons.up}{icons.stack}{icons.down}</Column>
            <Big $w={44} $ml={8}><IconSlot>{icons.gauge}</IconSlot><Label>更多</Label><Caret $mt={6} /></Big>
          </GroupBody>
          <GroupFoot $pad={147} $right={10}><span>显示</span><Caret /></GroupFoot>
        </Group>

        <Group $w={262}>
          <GroupBody>
            <PlayerGrid>
              <PlayerCell>{icons.prev}</PlayerCell>
              <PlayerCell>{icons.pause}</PlayerCell>
              <PlayerCell>{icons.first}<Caret /></PlayerCell>
              <PlayerCell>{icons.last}<Caret /></PlayerCell>
            </PlayerGrid>
            <Big $w={44}><IconSlot>{icons.play}</IconSlot><Label>播放</Label></Big>
            <SpeedBox>
              <Track><Thumb /></Track>
              <Label>速度</Label>
            </SpeedBox>
          </GroupBody>
          <GroupFoot $pad={92} $right={10}><span>刀轨动画</span><Caret /></GroupFoot>
        </Group>

        <Group $w={149}>
          <GroupBody>
            <div>
              <MachRow $mt={5}>
                <MachCell>{icons.mach1}</MachCell><MachCell>{icons.mach2}</MachCell><MachCell>{icons.mach3}</MachCell><MachCell>{icons.mach4}</MachCell>
                <MachSep /><MachCell>{icons.mach5}</MachCell>
              </MachRow>
              <MachRow $mt={7}>
                <MachCell>{icons.mach6}</MachCell><MachCell>{icons.mach7}</MachCell>
                <MachSep /><MachCell>{icons.mach8}</MachCell><MachCell>{icons.mach9}</MachCell><MachCell>{icons.mach10}</MachCell><MachCell>{icons.mach11}</MachCell>
              </MachRow>
            </div>
          </GroupBody>
          <GroupFoot $pad={1} $right={9}><span>加工工具 - GC工具...</span><Caret /></GroupFoot>
        </Group>

        <Group $w={65}>
          <GroupBody $pad={12}>
            <Column $w={50} $top={6} $gap={12} $align='flex-start'>
              {icons.ipwView}
              <SmallRow>{icons.ipwScope}<Caret $ml={4} /></SmallRow>
            </Column>
          </GroupBody>
          <GroupFoot $pad={8} $right={9}><span>IPW</span><Caret /></GroupFoot>
        </Group>

        <Group $w={90}>
          <GroupBody $pad={11}>
            <Column $w={28} $top={5} $gap={10}>{icons.featFind}{icons.featAdd}</Column>
            <Big $w={44} $ml={4}><IconSlot>{icons.featMore}</IconSlot><Label>更多</Label><Caret $mt={6} /></Big>
          </GroupBody>
          <GroupFoot $pad={21} $right={9}><span>特征</span><Caret /></GroupFoot>
        </Group>

        <Group $w={41} $last>
          <GroupBody />
          <GroupFoot $right={0}><span /><Caret /></GroupFoot>
        </Group>
      </Ribbon>

      <QuickBar>
        <Burger />
        <BarMenu>菜单(<u>M</u>)</BarMenu>
        <Caret $ml={1} />
        <BarSep $w={5} />
        <BarSep $w={38} />
        <Select $ml={17} $w={183}>无选择过滤器<Caret /></Select>
        <BarItem $w={35}>{icons.filter}</BarItem>
        <Select $w={190}>整个装配<Caret /></Select>
        <BarItem $w={40}>{icons.scope}<Caret $ml={2} /></BarItem>
        <BarItem $w={30}>{icons.fit}</BarItem>
        <BarItem $w={20}>{icons.hex}</BarItem>
        <BarItem $w={30}>{icons.boxPick}</BarItem>
        <BarItem $w={21}>{icons.squarePick}</BarItem>
        <BarItem $w={18}><Caret /></BarItem>
        <BarItem $w={30}>{icons.shade1}</BarItem>
        <BarItem $w={18}>{icons.shade2}</BarItem>
        <BarSep $w={11} />
        <BarItem $w={22} $ml={9} $on>{icons.mcsEye}</BarItem>
        <BarItem $w={28}>{icons.axisEye}</BarItem>
        <BarItem $w={20}>{icons.noEye}</BarItem>
        <BarSep $w={10} />
        <EndCaret />
      </QuickBar>

      <Workspace>
        <Rail>
          <RailGear>{railIcons.gear}</RailGear>
          <RailTab>{railIcons.parts}</RailTab>
          {railItems.map(([name, mt]) => (
            <RailItem key={name} $mt={mt}>{railIcons[name]}</RailItem>
          ))}
        </Rail>

        <Panel>
          <PanelHead>装配导航器<MaxBox /></PanelHead>
          <TreeTable>
            <TreeHead>
              <HeadCell $pad={6}>描述性部件名<SortUp /></HeadCell>
              <HeadCell $pad={6}>信息</HeadCell>
              <HeadCell $pad={6}>只.</HeadCell>
            </TreeHead>
            <TreeBody>
              <TreeRow>
                <NameCell $lift={2}>
                  <G w={38} h={22}><path d='M10 12V26M10 12H19' stroke='#999' strokeDasharray='1 1' /><path d='M20 7H26L28 9H35L33 18H20Z' stroke='#555' fill='#fff' /></G>
                  截面
                </NameCell>
                <SideCell /><SideCell />
              </TreeRow>
              <TreeRow>
                <NameCell>
                  <G w={20} h={24}><path d='M10 0V6' stroke='#999' strokeDasharray='1 1' /><rect x='5' y='7.5' width='9' height='9' fill='#fff' stroke='#bbb' /><path d='M7 12H12' stroke='#222' /></G>
                  <Check><Tick /></Check>
                  <G w={17} h={24}><g transform='translate(1 3)'><Cube x={3} y={0} s={.8} /><Cube x={0} y={7} s={.8} /><Cube x={7} y={8} s={.8} /></g></G>
                  <SelName>_model4_setup_1（顺序：时...</SelName>
                </NameCell>
                <SideCell $sel />
                <SideCell $sel><Floppy /></SideCell>
              </TreeRow>
              <TreeRow>
                <NameCell $lift={2}>
                  <G w={39} h={22}><path d='M29 0V12H39' stroke='#999' strokeDasharray='1 1' /></G>
                  <Check><Tick /></Check>
                  <G w={19} h={22}><Cube x={3} y={4} s={1.1} /></G>
                  <ModelName>_model4</ModelName>
                </NameCell>
                <SideCell />
                <SideCell><Floppy /></SideCell>
              </TreeRow>
              {emptyRows.map((i) => (
                <TreeRow key={i} $alt={i % 2 === 0}>
                  <NameCell /><SideCell /><SideCell />
                </TreeRow>
              ))}
            </TreeBody>
            <ScrollBar>
              <ScrollEnd><G w={8} h={12}><path d='M7 1L2 6L7 11' stroke='#444' strokeWidth='1.6' /></G></ScrollEnd>
              <ScrollThumb />
              <ScrollEnd><G w={8} h={12}><path d='M1 1L6 6L1 11' stroke='#444' strokeWidth='1.6' /></G></ScrollEnd>
            </ScrollBar>
          </TreeTable>
          <Splitter />
          <Section><SectionCaret />预览</Section>
          <Section><SectionCaret />相关性</Section>
        </Panel>

        <Center>
          <TabBar>
            <Tab $w={153} $pad={6}>
              <G w={20} h={18}><path d='M1 12L8 3L14 8L18 13L12 16L3 16Z' fill='#aaa' stroke='#666' /><ellipse cx='10' cy='12' rx='4' ry='2' fill='#777' /></G>
              _model4.prt
              <TabIcon $ml={8}><G w={10} h={12}><path d='M1 1H7L9 3V11H1Z' stroke='#333' /><path d='M4 5L6 7L4 9' stroke='#333' /></G></TabIcon>
            </Tab>
            <Tab $w={217} $pad={7} $on>
              <G w={20} h={18}><path d='M6 1H1V5H6V9H1V13H6' stroke='#fff' /><path d='M10 11A4 4 0 0 1 17 8M17 12A4 4 0 0 1 10 15' stroke='#fff' /></G>
              _model4_setup_1.prt
              <TabIcon $ml={6}><G w={10} h={12}><path d='M1 1H7L9 3V11H1Z' stroke='#fff' fill='#fff' /><path d='M4 5L6 7L4 9' stroke='#006a90' /></G></TabIcon>
              <TabIcon $ml={6}><G w={10} h={10}><path d='M1 1L9 9M9 1L1 9' stroke='#fff' strokeWidth='2' /></G></TabIcon>
            </Tab>
          </TabBar>
          <Viewport><Model /></Viewport>
        </Center>

        <RightRail>
          {rightIcons.map((icon, i) => (
            <RightItem key={i}>{icon}</RightItem>
          ))}
        </RightRail>
      </Workspace>

      <StatusBar>总计 1</StatusBar>
    </Page>
  );
}
